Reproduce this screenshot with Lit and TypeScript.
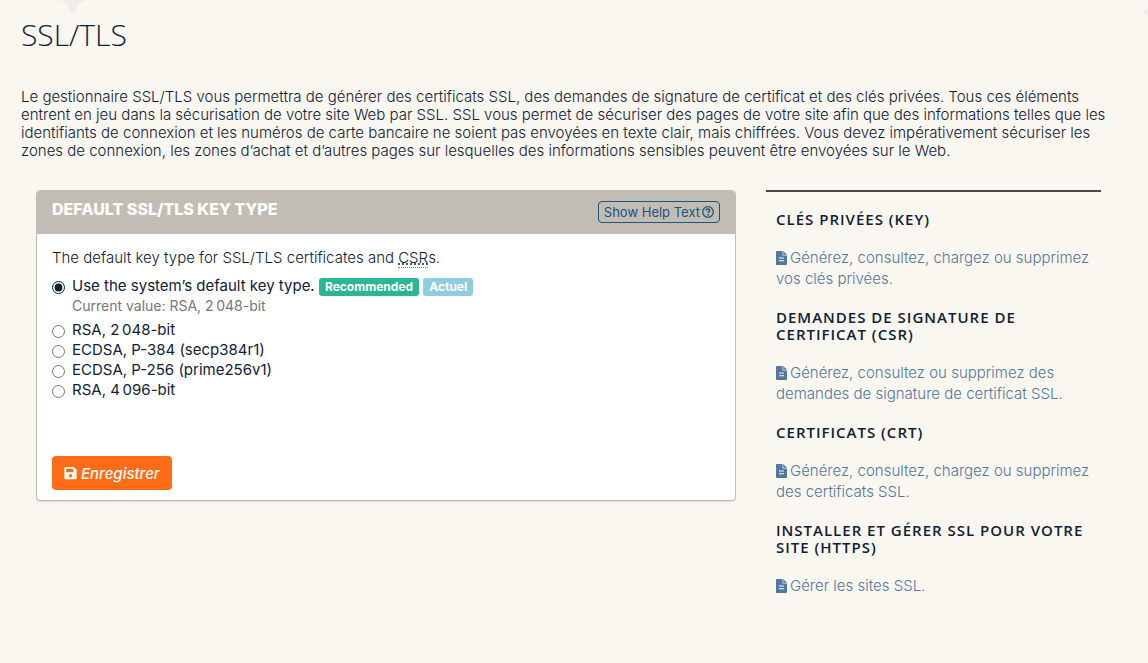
import { LitElement, html, css } from "lit";
import { customElement, state } from "lit/decorators.js";

interface KeyType {
  value: string;
  label: string;
}

interface SideSection {
  title: string;
  link: string;
}

const keyTypes: KeyType[] = [
  { value: "rsa-2048", label: "RSA, 2\u202f048-bit" },
  { value: "ecdsa-secp384r1", label: "ECDSA, P-384 (secp384r1)" },
  { value: "ecdsa-prime256v1", label: "ECDSA, P-256 (prime256v1)" },
  { value: "rsa-4096", label: "RSA, 4\u202f096-bit" },
];

const sections: SideSection[] = [
  { title: "Clés privées (KEY)", link: "Générez, consultez, chargez ou supprimez vos clés privées." },
  {
    title: "Demandes de signature de certificat (CSR)",
    link: "Générez, consultez ou supprimez des demandes de signature de certificat SSL.",
  },
  { title: "Certificats (CRT)", link: "Générez, consultez, chargez ou supprimez des certificats SSL." },
  { title: "Installer et gérer SSL pour votre site (HTTPS)", link: "Gérer les sites SSL." },
];

const fileIcon = html`<svg class="file" viewBox="0 0 11 14" aria-hidden="true">
  <path
    fill="currentColor"
    fill-rule="evenodd"
    d="M0.700 0H6.500V3.800Q6.500 4.500 7.200 4.500H11V13.300Q11 14 10.300 14H0.700Q0 14 0 13.300V0.700Q0 0 0.700 0ZM3 6.600V7.600H8V6.600ZM3 9.200V10.200H8V9.200Z"
  />
  <path fill="currentColor" d="M7.200 0L11 3.800H7.200Z" />
</svg>`;

const helpIcon = html`<svg class="help-icon" viewBox="0 0 512 512" aria-hidden="true">
  <circle cx="256" cy="256" r="226" fill="none" stroke="currentColor" stroke-width="54" />
  <path d="M176 204c6-48 38-74 80-74 44 0 76 26 76 64 0 54-72 50-72 100" fill="none" stroke="currentColor" stroke-width="62" />
  <circle cx="260" cy="368" r="40" fill="currentColor" />
</svg>`;

const saveIcon = html`<svg class="save-icon" viewBox="0 0 448 512" aria-hidden="true">
  <path fill="currentColor" d="M433.941 129.941l-83.882-83.882A48 48 0 0 0 316.118 32H48C21.490 32 0 53.490 0 80v352c0 26.510 21.490 48 48 48h352c26.510 0 48-21.490 48-48V163.882a48 48 0 0 0-14.059-33.941zM224 416c-35.346 0-64-28.654-64-64 0-35.346 28.654-64 64-64s64 28.654 64 64c0 35.346-28.654 64-64 64zm96-304.520V212c0 6.627-5.373 12-12 12H76c-6.627 0-12-5.373-12-12V108c0-6.627 5.373-12 12-12h228.520c3.183 0 6.235 1.264 8.485 3.515l3.480 3.480A11.996 11.996 0 0 1 320 111.480z"/>
</svg>`;

@customElement("app-root")
export class AppRoot extends LitElement {
  static styles = css`
    :host {
      display: block;
      position: relative;
      min-height: 100vh;
      box-sizing: border-box;
      padding: 19px 32px 20px 21px;
      background: #faf7f0;
      color: #0f2138;
      font: 300 15px/18px Inter, "Open Sans", sans-serif;
    }
    *,
    *::before {
      box-sizing: border-box;
    }
    h1,
    h2,
    h3,
    p {
      margin: 0;
    }
    .star,
    .dot {
      position: absolute;
      fill: #f0eeea;
    }
    .star {
      top: 0;
      left: 58px;
      width: 30px;
      height: 14px;
    }
    .dot {
      top: 8px;
      right: 0;
      width: 5px;
      height: 8px;
    }
    h1 {
      position: relative;
      font: 300 30px/32px "Open Sans", sans-serif;
    }
    .intro {
      margin: 37px 0 30px;
    }
    .columns {
      display: grid;
      grid-template-columns: minmax(0, 2fr) minmax(0, 1fr);
      align-items: start;
    }
    .main,
    .side {
      padding: 0 15px;
    }
    .panel {
      background: #fff;
      border: 1px solid #c1bdb5;
      border-radius: 4px;
      box-shadow: 0 1px 1px rgba(0, 0, 0, 0.1);
      overflow: hidden;
    }
    .panel-head {
      display: flex;
      justify-content: space-between;
      align-items: start;
      padding: 10px 15px 11px;
      background: #c1bdb5;
    }
    h2 {
      color: #fff;
      font: 800 16px/16px Inter, sans-serif;
      text-transform: uppercase;
    }
    button {
      font-family: inherit;
      cursor: pointer;
    }
    .help {
      display: flex;
      align-items: center;
      gap: 2px;
      height: 22px;
      padding: 0 5px;
      border: 1px solid #23527c;
      border-radius: 4px;
      background: transparent;
      color: #23527c;
      font-size: 13px;
      font-weight: 400;
    }
    .help-icon {
      width: 12px;
      height: 12px;
    }
    .panel-body {
      padding: 15px 15px 10px;
    }
    abbr {
      text-decoration: underline dotted;
      border-bottom: 1px dotted #777;
      cursor: help;
    }
    fieldset {
      margin: 0;
      padding: 0;
      border: 0;
    }
    legend {
      padding: 0;
      margin-bottom: 9px;
    }
    .option {
      display: flex;
      gap: 7px;
      font-weight: 400;
      line-height: 20px;
    }
    .option input {
      flex: none;
      width: 13px;
      height: 13px;
      margin: 5px 0 0;
      accent-color: #0f2138;
    }
    .badge {
      display: inline-block;
      padding: 0 6px;
      border-radius: 3px;
      color: #fff;
      font-weight: 700;
      font-size: 12px;
      line-height: 18px;
    }
    .recommended {
      background: #2ab795;
    }
    .current {
      background: #8fcce0;
    }
    .note {
      margin: 0 0 4px 20px;
      color: #777;
      font-size: 14px;
      font-weight: 400;
      line-height: 20px;
    }
    .save {
      display: flex;
      align-items: center;
      gap: 4px;
      height: 34px;
      margin-top: 56px;
      padding: 0 12px;
      border: 0;
      border-radius: 4px;
      background: #ff6c17;
      color: #fff;
      font-size: 15px;
      font-weight: 500;
      font-style: italic;
    }
    .save-icon {
      width: 13px;
      height: 14px;
    }
    .side-inner {
      padding: 19px 10px 0;
      border-top: 2px solid #484545;
    }
    h3 {
      font: 600 15px/17px "Open Sans", sans-serif;
      letter-spacing: 1px;
      text-transform: uppercase;
    }
    .side p {
      margin: 19px 0 20px;
      line-height: 21px;
    }
    .side a {
      color: #53779f;
      text-decoration: none;
    }
    .file {
      width: 11px;
      height: 14px;
      margin-right: 3px;
      vertical-align: -2px;
    }
    @media (max-width: 760px) {
      .columns {
        grid-template-columns: minmax(0, 1fr);
        gap: 30px;
      }
    }
  `;

  @state() private selected = "system";

  private option(value: string, label: unknown) {
    return html`<label class="option">
      <input
        type="radio"
        name="key-type"
        .value=${value}
        .checked=${this.selected === value}
        @change=${() => (this.selected = value)}
      />
      <span>${label}</span>
    </label>`;
  }

  render() {
    return html`
      <svg class="star" viewBox="0 0 30 14" aria-hidden="true">
        <path d="M0 0H30C22 2 20 4 18.500 10Q17.500 14 15 14Q12.500 14 11.500 10C10 4 8 2 0 0Z" />
      </svg>
      <svg class="dot" viewBox="0 0 5 8" aria-hidden="true">
        <path d="M5 0Q0 1 0 4Q0 6 5 8Z" />
      </svg>
      <h1>SSL/TLS</h1>
      <p class="intro">
        Le gestionnaire SSL/TLS vous permettra de générer des certificats SSL, des demandes de signature de certificat
        et des clés privées. Tous ces éléments entrent en jeu dans la sécurisation de votre site Web par SSL. SSL vous
        permet de sécuriser des pages de votre site afin que des informations telles que les identifiants de connexion
        et les numéros de carte bancaire ne soient pas envoyées en texte clair, mais chiffrées. Vous devez
        impérativement sécuriser les zones de connexion, les zones d’achat et d’autres pages sur lesquelles des
        informations sensibles peuvent être envoyées sur le Web.
      </p>
      <div class="columns">
        <main class="main">
          <section class="panel">
            <div class="panel-head">
              <h2>Default SSL/TLS Key Type</h2>
              <button class="help" type="button">Show Help Text ${helpIcon}</button>
            </div>
            <form class="panel-body" @submit=${(e: Event) => e.preventDefault()}>
              <fieldset>
                <legend>The default key type for SSL/TLS certificates and <abbr title="Certificate Signing Request">CSR</abbr>s.</legend>
                ${this.option(
                  "system",
                  html`Use the system’s default key type. <span class="badge recommended">Recommended</span> <span class="badge current">Actuel</span>`
                )}
                <p class="note">Current value: RSA, 2${"\u202f"}048-bit</p>
                ${keyTypes.map((k) => this.option(k.value, k.label))}
              </fieldset>
              <button class="save" type="submit">${saveIcon}Enregistrer</button>
            </form>
          </section>
        </main>
        <aside class="side">
          <div class="side-inner">
            ${sections.map(
              (s) => html`<h3>${s.title}</h3>
                <p><a href="#">${fileIcon}${s.link}</a></p>`
            )}
          </div>
        </aside>
      </div>
    `;
  }
}
